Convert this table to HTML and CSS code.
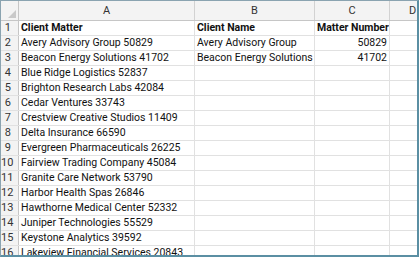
FILE: index.html
```html
<!DOCTYPE html>
<html>
<head>
<meta charset="utf-8">
<link rel="stylesheet" href="styles.css">
</head>
<body>
<div class="frame">
  <div class="sheet">
    <div class="row head">
      <div class="rh corner"><span class="tri"></span></div>
      <div class="c a ch">A</div>
      <div class="c b ch">B</div>
      <div class="c cc ch">C</div>
      <div class="c d ch">D</div>
    </div>
    <div class="row"><div class="rh">1</div><div class="c a bold">Client Matter</div><div class="c b bold">Client Name</div><div class="c cc bold">Matter Number</div><div class="c d"></div></div>
    <div class="row"><div class="rh">2</div><div class="c a">Avery Advisory Group 50829</div><div class="c b">Avery Advisory Group</div><div class="c cc num">50829</div><div class="c d"></div></div>
    <div class="row"><div class="rh">3</div><div class="c a">Beacon Energy Solutions 41702</div><div class="c b">Beacon Energy Solutions</div><div class="c cc num">41702</div><div class="c d"></div></div>
    <div class="row"><div class="rh">4</div><div class="c a">Blue Ridge Logistics 52837</div><div class="c b"></div><div class="c cc"></div><div class="c d"></div></div>
    <div class="row"><div class="rh">5</div><div class="c a">Brighton Research Labs 42084</div><div class="c b"></div><div class="c cc"></div><div class="c d"></div></div>
    <div class="row"><div class="rh">6</div><div class="c a">Cedar Ventures 33743</div><div class="c b"></div><div class="c cc"></div><div class="c d"></div></div>
    <div class="row"><div class="rh">7</div><div class="c a">Crestview Creative Studios 11409</div><div class="c b"></div><div class="c cc"></div><div class="c d"></div></div>
    <div class="row"><div class="rh">8</div><div class="c a">Delta Insurance 66590</div><div class="c b"></div><div class="c cc"></div><div class="c d"></div></div>
    <div class="row"><div class="rh">9</div><div class="c a">Evergreen Pharmaceuticals 26225</div><div class="c b"></div><div class="c cc"></div><div class="c d"></div></div>
    <div class="row"><div class="rh">10</div><div class="c a">Fairview Trading Company 45084</div><div class="c b"></div><div class="c cc"></div><div class="c d"></div></div>
    <div class="row"><div class="rh">11</div><div class="c a">Granite Care Network 53790</div><div class="c b"></div><div class="c cc"></div><div class="c d"></div></div>
    <div class="row"><div class="rh">12</div><div class="c a">Harbor Health Spas 26846</div><div class="c b"></div><div class="c cc"></div><div class="c d"></div></div>
    <div class="row"><div class="rh">13</div><div class="c a">Hawthorne Medical Center 52332</div><div class="c b"></div><div class="c cc"></div><div class="c d"></div></div>
    <div class="row"><div class="rh">14</div><div class="c a">Juniper Technologies 55529</div><div class="c b"></div><div class="c cc"></div><div class="c d"></div></div>
    <div class="row"><div class="rh">15</div><div class="c a">Keystone Analytics 39592</div><div class="c b"></div><div class="c cc"></div><div class="c d"></div></div>
    <div class="row"><div class="rh">16</div><div class="c a">Lakeview Financial Services 20843</div><div class="c b"></div><div class="c cc"></div><div class="c d"></div></div>
  </div>
</div>
</body>
</html>
```

FILE: styles.css
```css
html, body {
  margin: 0;
  padding: 0;
  background: #ffffff;
}
.frame {
  width: 419px;
  height: 257px;
  box-sizing: border-box;
  border-top: 1px solid #8aa3b0;
  border-left: 1px solid #8aa3b0;
  border-right: 2px solid #5b8fa3;
  border-bottom: 2px solid #5b8fa3;
  overflow: hidden;
  font-family: Roboto, "Liberation Sans", sans-serif;
  font-size: 10.5px;
  color: #111;
}
.sheet {
  width: 460px;
}
.row {
  display: flex;
  height: 15px;
  box-sizing: border-box;
  border-bottom: 1px solid #e1e1e1;
}
.row.head {
  height: 20px;
  border-bottom: 1px solid #c6c6c6;
  background: #f3f3f3;
}
.rh {
  width: 18px;
  flex: none;
  box-sizing: border-box;
  background: #f3f3f3;
  border-right: 1px solid #c6c6c6;
  color: #333;
  text-align: right;
  padding-right: 7px;
  line-height: 14px;
  font-size: 11px;
}
.corner {
  position: relative;
}
.tri {
  position: absolute;
  right: 2px;
  bottom: 2px;
  width: 0;
  height: 0;
  border-left: 8px solid transparent;
  border-bottom: 8px solid #c9c9c9;
}
.c {
  flex: none;
  box-sizing: border-box;
  border-right: 1px solid #e1e1e1;
  padding: 0 2px;
  line-height: 14px;
  white-space: nowrap;
  overflow: hidden;
}
.ch {
  text-align: center;
  color: #333;
  line-height: 20px;
  font-size: 11px;
  border-right-color: #d2d2d2;
}
.a { width: 176px; }
.b { width: 120px; }
.cc { width: 75px; }
.d { width: 46px; }
.bold { font-weight: bold; }
.num { text-align: right; }
```
